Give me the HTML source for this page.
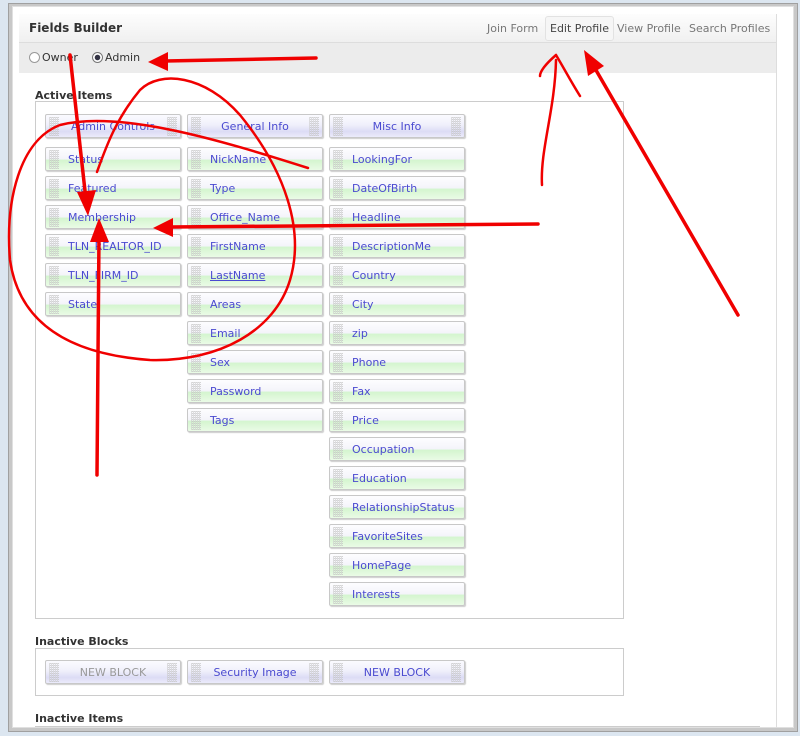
<!DOCTYPE html>
<html><head><meta charset="utf-8">
<style>
*{box-sizing:border-box;margin:0;padding:0}
html,body{width:800px;height:736px;overflow:hidden;background:#dce6f0;font-family:Verdana,"DejaVu Sans",sans-serif}
#frame{position:absolute;left:8px;top:3px;width:790px;height:729px;background:#c8c8c8;border:1px solid #a0a0a0}
#inner{position:absolute;left:12px;top:6px;width:782px;height:722px;background:#fff;border:1px solid #e0e0e0}
#hdr{position:absolute;left:19px;top:14px;width:757px;height:29px;background:linear-gradient(#fdfdfd,#f0f0f0);border-bottom:1px solid #ddd}
#hdr b{position:absolute;left:10px;top:7px;font-size:12px;color:#333;font-family:"DejaVu Sans",sans-serif}
.tab{position:absolute;top:8px;font-size:11px;color:#777}
#bar{position:absolute;left:19px;top:43px;width:757px;height:30px;background:#ececec}
.lbl{position:absolute;font-weight:bold;font-size:11px;color:#333;font-family:"DejaVu Sans",sans-serif}
.box{position:absolute;border:1px solid #ccc;background:#fff}
.it{position:absolute;width:136px;height:24px;border:1px solid #c8c8c8;border-radius:2px;box-shadow:1px 1px 1px #ccc;background:linear-gradient(#fdfdff 0%,#f4f4fa 50%,#d4f5cf 55%,#eafbe6 100%);font-size:11px;color:#4a4ad0;padding:5px 0 0 22px;white-space:nowrap}
.it:before{content:"";position:absolute;left:3px;top:2px;width:10px;height:19px;background:repeating-linear-gradient(90deg,#ccc 0 1px,transparent 1px 2px),repeating-linear-gradient(0deg,#bbb 0 1px,transparent 1px 2px);opacity:.6}
.bl{background:linear-gradient(#fbfbff 0%,#f0f0fb 45%,#dcdcf5 75%,#ecebfb 100%);text-align:center;padding-left:0}
.bl:after{content:"";position:absolute;right:3px;top:2px;width:10px;height:19px;background:repeating-linear-gradient(90deg,#ccc 0 1px,transparent 1px 2px),repeating-linear-gradient(0deg,#bbb 0 1px,transparent 1px 2px);opacity:.6}
</style></head><body>
<div id="frame"></div><div id="inner"></div>
<div id="hdr"><b>Fields Builder</b>
<span class="tab" style="left:468px">Join Form</span>
<span class="tab" style="left:526px;top:2px;padding:5px 4px;border:1px solid #e2e2e2;border-radius:3px;background:#f6f6f6;color:#444">Edit Profile</span>
<span class="tab" style="left:598px">View Profile</span>
<span class="tab" style="left:670px">Search Profiles</span>
</div>
<div id="bar">
<span style="position:absolute;left:10px;top:9px;width:11px;height:11px;border:1px solid #999;border-radius:50%;background:#fff"></span>
<span style="position:absolute;left:23px;top:8px;font-size:11px;color:#333">Owner</span>
<span style="position:absolute;left:73px;top:9px;width:11px;height:11px;border:1px solid #777;border-radius:50%;background:radial-gradient(#334 0 2.5px,#fff 3px)"></span>
<span style="position:absolute;left:86px;top:8px;font-size:11px;color:#333">Admin</span>
</div>
<div class="lbl" style="left:35px;top:89px">Active Items</div>
<div class="box" style="left:35px;top:101px;width:589px;height:518px"></div>
<div class="lbl" style="left:35px;top:635px">Inactive Blocks</div>
<div class="box" style="left:35px;top:648px;width:589px;height:48px"></div>
<div class="lbl" style="left:35px;top:712px">Inactive Items</div>
<div style="position:absolute;left:35px;top:726px;width:725px;height:1px;background:#ccc"></div>
<div style="position:absolute;left:776px;top:14px;width:1px;height:714px;background:#ddd"></div>

<div class="it bl" style="left:45px;top:114px">Admin Controls</div>
<div class="it bl" style="left:187px;top:114px">General Info</div>
<div class="it bl" style="left:329px;top:114px">Misc Info</div>

<div class="it" style="left:45px;top:147px">Status</div>
<div class="it" style="left:45px;top:176px">Featured</div>
<div class="it" style="left:45px;top:205px">Membership</div>
<div class="it" style="left:45px;top:234px">TLN_REALTOR_ID</div>
<div class="it" style="left:45px;top:263px">TLN_FIRM_ID</div>
<div class="it" style="left:45px;top:292px">State</div>

<div class="it" style="left:187px;top:147px">NickName</div>
<div class="it" style="left:187px;top:176px">Type</div>
<div class="it" style="left:187px;top:205px">Office_Name</div>
<div class="it" style="left:187px;top:234px">FirstName</div>
<div class="it" style="left:187px;top:263px"><u>LastName</u></div>
<div class="it" style="left:187px;top:292px">Areas</div>
<div class="it" style="left:187px;top:321px">Email</div>
<div class="it" style="left:187px;top:350px">Sex</div>
<div class="it" style="left:187px;top:379px">Password</div>
<div class="it" style="left:187px;top:408px">Tags</div>

<div class="it" style="left:329px;top:147px">LookingFor</div>
<div class="it" style="left:329px;top:176px">DateOfBirth</div>
<div class="it" style="left:329px;top:205px">Headline</div>
<div class="it" style="left:329px;top:234px">DescriptionMe</div>
<div class="it" style="left:329px;top:263px">Country</div>
<div class="it" style="left:329px;top:292px">City</div>
<div class="it" style="left:329px;top:321px">zip</div>
<div class="it" style="left:329px;top:350px">Phone</div>
<div class="it" style="left:329px;top:379px">Fax</div>
<div class="it" style="left:329px;top:408px">Price</div>
<div class="it" style="left:329px;top:437px">Occupation</div>
<div class="it" style="left:329px;top:466px">Education</div>
<div class="it" style="left:329px;top:495px">RelationshipStatus</div>
<div class="it" style="left:329px;top:524px">FavoriteSites</div>
<div class="it" style="left:329px;top:553px">HomePage</div>
<div class="it" style="left:329px;top:582px">Interests</div>

<div class="it bl" style="left:45px;top:660px;color:#999">NEW BLOCK</div>
<div class="it bl" style="left:187px;top:660px">Security Image</div>
<div class="it bl" style="left:329px;top:660px">NEW BLOCK</div>

<svg width="800" height="736" style="position:absolute;left:0;top:0" fill="none" stroke="#f00000" stroke-linecap="round" stroke-linejoin="round">
<g stroke-width="3.5">
<line x1="316" y1="58" x2="165" y2="61"/>
<line x1="70" y1="55" x2="86" y2="200"/>
<line x1="538" y1="224" x2="170" y2="227"/>
<line x1="97" y1="475" x2="99" y2="235"/>
<line x1="738" y1="315" x2="593" y2="65"/>
</g>
<g fill="#f00000" stroke="none">
<polygon points="148,62 168,52 168,71"/>
<polygon points="88,216 77,192 96,190"/>
<polygon points="153,228 173,218 173,237"/>
<polygon points="99,218 90,242 109,242"/>
<polygon points="584,50 588,76 604,66"/>
</g>
<g stroke-width="2.5">
<path d="M542,185 C540,150 555,110 556,60 M556,55 C548,62 540,70 540,76 M556,55 C565,70 570,80 580,96"/>
<path d="M308,168 C220,140 120,110 60,125 C20,140 5,200 10,260 C20,330 80,355 150,360 C220,362 275,330 290,280 C305,230 285,170 240,115 C205,75 160,70 140,90 C115,120 105,150 97,172"/>
</g>
</svg>
</body></html>
